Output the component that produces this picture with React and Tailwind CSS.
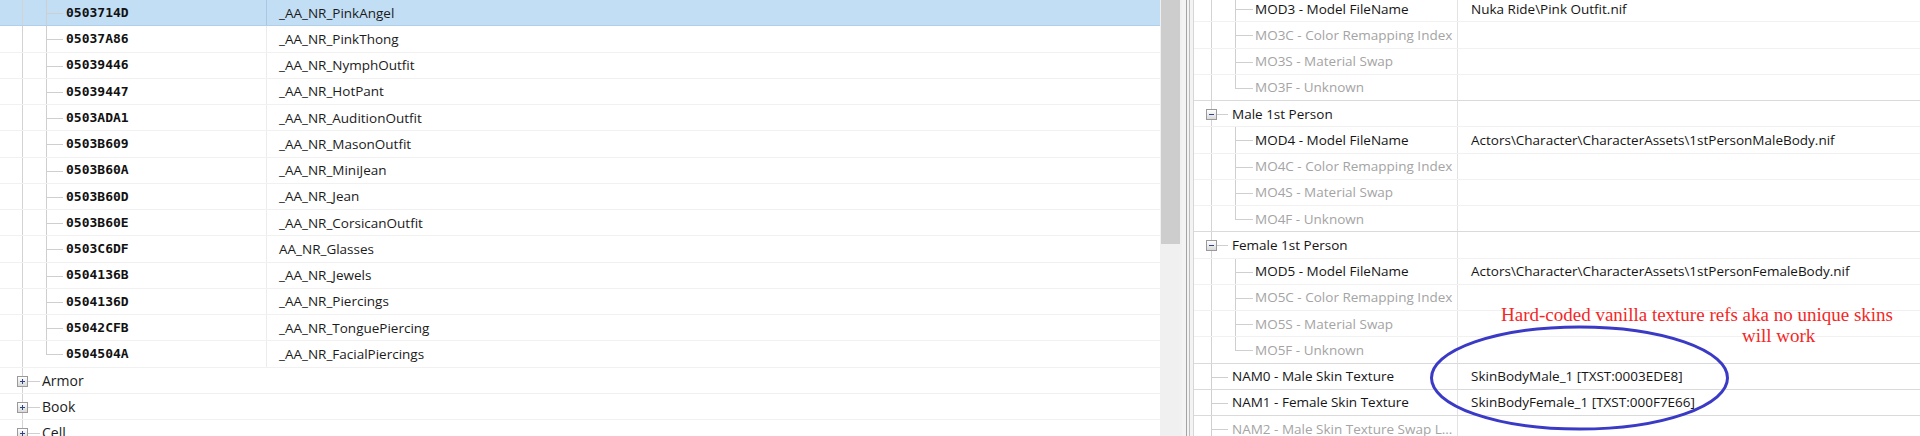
import React from 'react';

const records = [
  ['0503714D', '_AA_NR_PinkAngel'],
  ['05037A86', '_AA_NR_PinkThong'],
  ['05039446', '_AA_NR_NymphOutfit'],
  ['05039447', '_AA_NR_HotPant'],
  ['0503ADA1', '_AA_NR_AuditionOutfit'],
  ['0503B609', '_AA_NR_MasonOutfit'],
  ['0503B60A', '_AA_NR_MiniJean'],
  ['0503B60D', '_AA_NR_Jean'],
  ['0503B60E', '_AA_NR_CorsicanOutfit'],
  ['0503C6DF', 'AA_NR_Glasses'],
  ['0504136B', '_AA_NR_Jewels'],
  ['0504136D', '_AA_NR_Piercings'],
  ['05042CFB', '_AA_NR_TonguePiercing'],
  ['0504504A', '_AA_NR_FacialPiercings'],
];

const categories = ['Armor', 'Book', 'Cell'];

// kind: child = sub-record under an expanded group, group = expandable node, leaf = top-level field
const fields = [
  { kind: 'child', label: 'MOD3 - Model FileName', value: 'Nuka Ride\\Pink Outfit.nif' },
  { kind: 'child', label: 'MO3C - Color Remapping Index', dim: true },
  { kind: 'child', label: 'MO3S - Material Swap', dim: true },
  { kind: 'child', label: 'MO3F - Unknown', dim: true, last: true },
  { kind: 'group', label: 'Male 1st Person' },
  { kind: 'child', label: 'MOD4 - Model FileName', value: 'Actors\\Character\\CharacterAssets\\1stPersonMaleBody.nif' },
  { kind: 'child', label: 'MO4C - Color Remapping Index', dim: true },
  { kind: 'child', label: 'MO4S - Material Swap', dim: true },
  { kind: 'child', label: 'MO4F - Unknown', dim: true, last: true },
  { kind: 'group', label: 'Female 1st Person' },
  { kind: 'child', label: 'MOD5 - Model FileName', value: 'Actors\\Character\\CharacterAssets\\1stPersonFemaleBody.nif' },
  { kind: 'child', label: 'MO5C - Color Remapping Index', dim: true },
  { kind: 'child', label: 'MO5S - Material Swap', dim: true },
  { kind: 'child', label: 'MO5F - Unknown', dim: true, last: true },
  { kind: 'leaf', label: 'NAM0 - Male Skin Texture', value: 'SkinBodyMale_1 [TXST:0003EDE8]' },
  { kind: 'leaf', label: 'NAM1 - Female Skin Texture', value: 'SkinBodyFemale_1 [TXST:000F7E66]' },
  { kind: 'leaf', label: 'NAM2 - Male Skin Texture Swap L...', dim: true },
];

function ExpandBox({ open }) {
  return (
    <div className="w-[11px] h-[11px] shrink-0 border border-[#9a9a9a] bg-linear-to-b from-white to-[#d9d9d9] flex items-center justify-center">
      <svg width="5" height="5" viewBox="0 0 5 5" shapeRendering="crispEdges">
        <rect x="0" y="2" width="5" height="1" fill="#2c4783" />
        {!open && <rect x="2" y="0" width="1" height="5" fill="#2c4783" />}
      </svg>
    </div>
  );
}

// vertical guide for one tree level, optionally with the +/- box on it
function Stem({ box, open }) {
  return (
    <div className="w-[11px] shrink-0 flex flex-col items-center">
      {box ? (
        <>
          <div className="h-[8px] w-px bg-[#d3d3d3]" />
          <ExpandBox open={open} />
          <div className="flex-1 w-px bg-[#d3d3d3]" />
        </>
      ) : (
        <div className="flex-1 w-px bg-[#d3d3d3]" />
      )}
    </div>
  );
}

// └ / ├ connector
function Elbow({ last, w }) {
  return (
    <div className={`flex flex-col shrink-0 ${w}`}>
      <div className="h-[14px] border-l border-b border-[#cfcfcf]" />
      <div className={`flex-1 ${last ? '' : 'border-l border-[#cfcfcf]'}`} />
    </div>
  );
}

function RecordList() {
  return (
    <div className="w-[1160px] h-full overflow-hidden">
      {records.map(([id, name], i) => {
        const selected = i === 0;
        return (
          <div
            key={id}
            className={`flex h-[26.25px] border-b ${selected ? 'bg-[#c2def5] border-[#afcfea]' : 'border-[#f1f1f1]'}`}
          >
            <div className={`flex w-[267px] pl-[17px] border-r ${selected ? 'border-[#a9c7e2]' : 'border-[#ececec]'}`}>
              <Stem />
              <div className="w-[18px]" />
              <Elbow w="w-[17px]" last={i === records.length - 1} />
              <span className="self-center ml-[3px] font-['DejaVu_Sans_Mono',monospace] font-bold text-[13px] text-[#111]">
                {id}
              </span>
            </div>
            <div className="flex-1 flex items-center pl-[12px]">{name}</div>
          </div>
        );
      })}
      {categories.map((name) => (
        <div key={name} className="flex h-[26.25px] border-b border-[#f1f1f1]">
          <div className="flex w-[267px] pl-[17px] border-r border-white">
            <Stem box />
            <div className="mt-[13px] w-[12px] h-px bg-[#cfcfcf]" />
            <span className="self-center ml-[2px] text-[14px]">{name}</span>
          </div>
        </div>
      ))}
    </div>
  );
}

function FieldRow({ f }) {
  const strong = f.kind === 'child' ? f.last : f.kind === 'leaf';
  return (
    <div className={`flex h-[26.25px] border-b ${strong ? 'border-[#dadada]' : 'border-[#f1f1f1]'}`}>
      <div
        className={`flex w-[264px] shrink-0 border-r border-[#e3e3e3] whitespace-nowrap ${
          f.kind === 'leaf' ? 'pl-[17px]' : 'pl-[12px]'
        } ${f.dim ? 'text-[#a4a4a4]' : 'text-[#151515]'}`}
      >
        {f.kind === 'child' && (
          <>
            <Stem />
            <div className="w-[18px] shrink-0" />
            <Elbow w="w-[18px]" last={f.last} />
            <span className="self-center ml-[2px]">{f.label}</span>
          </>
        )}
        {f.kind === 'group' && (
          <>
            <Stem box open />
            <div className="mt-[13px] w-[11px] h-px bg-[#cfcfcf]" />
            <span className="self-center ml-[4px]">{f.label}</span>
          </>
        )}
        {f.kind === 'leaf' && (
          <>
            <Elbow w="w-[17px]" />
            <span className="self-center ml-[4px]">{f.label}</span>
          </>
        )}
      </div>
      <div className="flex-1 flex items-center pl-[13px] whitespace-nowrap text-[#151515]">{f.value}</div>
    </div>
  );
}

function FieldTree() {
  return (
    <div className="flex-1 h-full overflow-hidden border-l border-[#d6d6d6]">
      <div className="-mt-[4px]">
        {fields.map((f) => (
          <FieldRow key={f.label} f={f} />
        ))}
      </div>
    </div>
  );
}

function Note() {
  return (
    <>
      <div className="absolute left-[1501px] top-[304px] flex flex-col font-['Liberation_Serif',serif] text-[19px] leading-[21px] text-[#f32727] whitespace-nowrap">
        <span>Hard-coded vanilla texture refs aka no unique skins</span>
        <span className="pl-[241px]">will work</span>
      </div>
      <svg className="absolute left-[1420px] top-[318px]" width="320" height="122" viewBox="0 0 320 122">
        <ellipse cx="159.5" cy="60" rx="148" ry="51" fill="none" stroke="#3a3ac6" strokeWidth="3" />
      </svg>
    </>
  );
}

export default function App() {
  return (
    <div className="relative flex w-[1920px] h-[436px] overflow-hidden bg-white text-[13.5px] text-[#1b1b1b] font-['Open_Sans','Noto_Sans',sans-serif]">
      <RecordList />
      <div className="w-[22px] h-full bg-[#f0f0f0] pl-[1px]">
        <div className="w-[19px] h-[244px] bg-[#cdcdcd]" />
      </div>
      <div className="w-[11px] h-full bg-[#f3f3f3] pl-[4px]">
        <div className="w-[4px] h-full border-l border-r border-l-[#a3a3a3] border-r-[#bdbdbd]" />
      </div>
      <FieldTree />
      <Note />
    </div>
  );
}
